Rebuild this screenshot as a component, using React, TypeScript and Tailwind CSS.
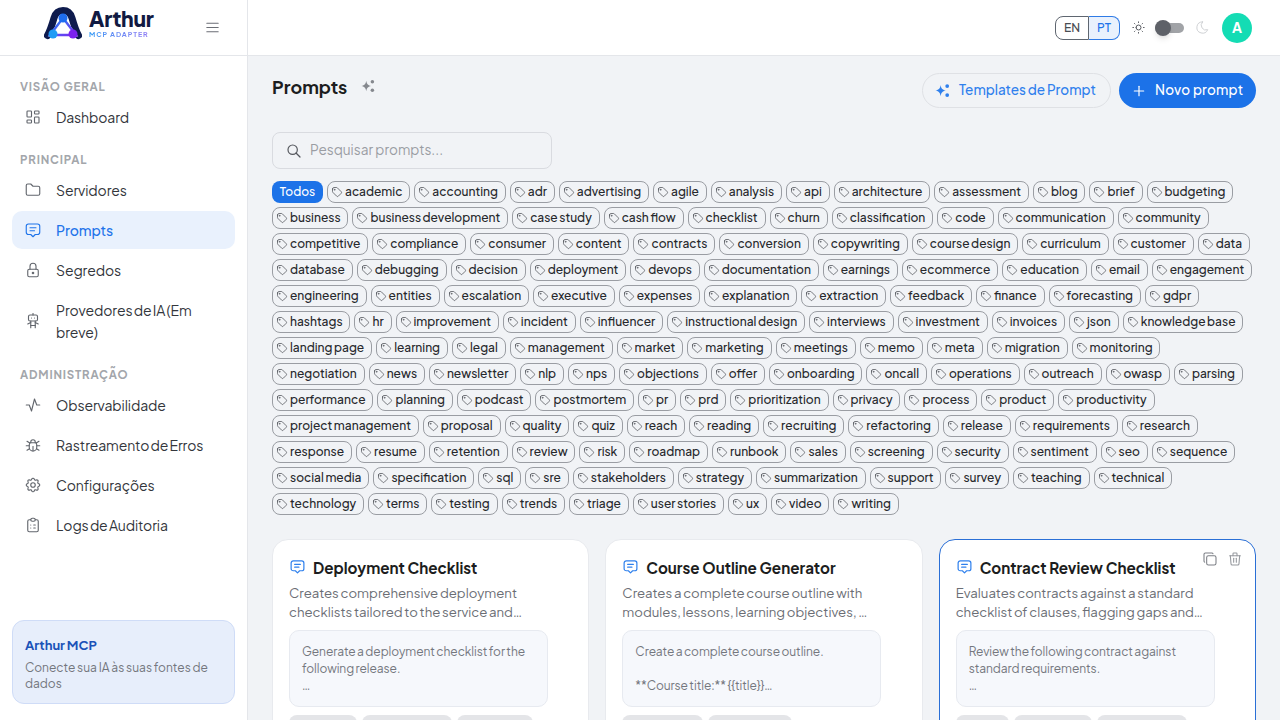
import React from "react";
import {
  TbLayoutDashboard, TbFolder, TbMessage2, TbLock, TbRobot, TbActivity, TbBug, TbSettings, TbClipboardList,
  TbTag, TbCopy, TbTrash, TbSun, TbMoon, TbSearch, TbMenu2, TbPlus,
} from "react-icons/tb";

const FONT = "font-['Plus_Jakarta_Sans','Inter','Noto_Sans',sans-serif]";

const Spark = ({ className }: { className?: string }) => (
  <svg viewBox="0 0 16 16" className={className} fill="currentColor">
    <path d="M6 2 C6.6 5.6 7.6 7 11.5 8 C7.6 9 6.6 10.4 6 14 C5.4 10.4 4.4 9 0.5 8 C4.4 7 5.4 5.6 6 2Z" />
    <circle cx="13" cy="3.2" r="2" />
    <circle cx="13" cy="12.8" r="2" />
  </svg>
);

const Logo = () => (
  <svg viewBox="0 0 38 33" className="w-[38px] h-[33px]">
    <defs>
      <linearGradient id="g1" x1="0" y1="0" x2="1" y2="1">
        <stop offset="0" stopColor="#1d8bf5" />
        <stop offset="1" stopColor="#7a2cf0" />
      </linearGradient>
    </defs>
    <path d="M3.5 28.5 C6 24 8 18 10 11 C11.5 6 14 3.5 19 3.5 C24 3.5 26.5 6 28 11 C30 18 32 24 34.5 28.5" fill="none" stroke="#0e1b4d" strokeWidth="7" strokeLinecap="round" />
    <path d="M19 11 L7 28 L31 28 Z" fill="#fff" stroke="#fff" strokeWidth="3" />
    <path d="M19 11 L6 28 L32 28 Z" fill="#fff" stroke="url(#g1)" strokeWidth="2.4" />
    <circle cx="19" cy="11" r="4.5" fill="#1e6df0" />
    <circle cx="9" cy="27" r="4.5" fill="#1e9bf5" />
    <circle cx="29" cy="27" r="4.5" fill="#7b22ee" />
  </svg>
);

type N = { label: React.ReactNode; icon: React.ComponentType<{ className?: string; strokeWidth?: number }>; active?: boolean; tall?: boolean };

const NavItem = ({ label, icon: Icon, active, tall }: N) => (
  <div className={`flex items-center gap-[14px] px-3 rounded-[10px] text-[14px] [word-spacing:-1px] tracking-[-0.1px] ${tall ? "py-[8px] leading-[22px]" : "h-[38px]"} ${active ? "bg-[#e9f1fd] text-[#1f74ea] font-medium" : "text-[#33363c]"}`}>
    <Icon strokeWidth={1.5} className={`w-[18px] h-[18px] shrink-0 ${active ? "text-[#1f74ea]" : "text-[#62666d]"}`} />
    <span>{label}</span>
  </div>
);

const Section = ({ title }: { title: string }) => (
  <div className="px-2 text-[11.5px] font-bold tracking-[0.07em] text-[#a3a6ab] leading-[16px]">{title}</div>
);

const rows = "academic,accounting,adr,advertising,agile,analysis,api,architecture,assessment,blog,brief,budgeting,business,business development,case study,cash flow,checklist,churn,classification,code,communication,community,competitive,compliance,consumer,content,contracts,conversion,copywriting,course design,curriculum,customer,data,database,debugging,decision,deployment,devops,documentation,earnings,ecommerce,education,email,engagement,engineering,entities,escalation,executive,expenses,explanation,extraction,feedback,finance,forecasting,gdpr,hashtags,hr,improvement,incident,influencer,instructional design,interviews,investment,invoices,json,knowledge base,landing page,learning,legal,management,market,marketing,meetings,memo,meta,migration,monitoring,negotiation,news,newsletter,nlp,nps,objections,offer,onboarding,oncall,operations,outreach,owasp,parsing,performance,planning,podcast,postmortem,pr,prd,prioritization,privacy,process,product,productivity,project management,proposal,quality,quiz,reach,reading,recruiting,refactoring,release,requirements,research,response,resume,retention,review,risk,roadmap,runbook,sales,screening,security,sentiment,seo,sequence,social media,specification,sql,sre,stakeholders,strategy,summarization,support,survey,teaching,technical,technology,terms,testing,trends,triage,user stories,ux,video,writing".split(",");

const Tag = ({ t }: { t: string }) => (
  <span className="inline-flex items-center h-[22px] gap-[2px] pl-[3px] pr-[6.9px] rounded-[8px] border border-[#9a9da3] text-[12px] font-medium text-[#26282c] [word-spacing:-0.5px]">
    <TbTag strokeWidth={1.6} className="w-[12px] h-[12px] text-[#55585e]" />
    {t}
  </span>
);

const Card = ({ title, desc, prompt, tags, hover }: { title: string; desc: string; prompt: string; tags: { t: string; w: string }[]; hover?: boolean }) => (
  <div className={`relative rounded-[16px] border bg-white p-[16px] pb-0 ${hover ? "border-[#2a6fd6]" : "border-[#e8eaee]"}`}>
    {hover && (
      <div className="absolute top-[11px] right-[12px] flex items-center gap-[9px] text-[#7c7f85]">
        <TbCopy strokeWidth={1.6} className="w-[16px] h-[16px]" />
        <TbTrash strokeWidth={1.6} className="w-[16px] h-[16px] text-[#96999e]" />
      </div>
    )}
    <div className="flex items-center gap-[7px] h-[24px]">
      <TbMessage2 strokeWidth={1.7} className="w-[17px] h-[17px] -mt-[4px] text-[#2f80ed]" />
      <div className="text-[15.2px] font-bold text-[#1c1d20]">{title}</div>
    </div>
    <div className="mt-[3px] text-[13.2px] leading-[19px] text-[#6b6e75] w-[270px] [word-spacing:-0.5px]">{desc}</div>
    <div className="mt-[9px] w-[259px] h-[77px] overflow-hidden rounded-[10px] border border-[#e7eaf0] bg-[#f6f8fc] px-[12px] pt-[12px] text-[12px] leading-[17px] text-[#74777e] whitespace-pre-line [word-spacing:-0.5px] tracking-[-0.06px]">{prompt}</div>
    <div className="mt-[8px] flex gap-[5px] h-[22px]">
      {tags.map(({ t, w }) => (
        <span key={t} className={`inline-flex items-center gap-[3px] pl-[5px] rounded-[8px] bg-[#e4e5e8] h-[22px] text-[12px] text-[#6b6e75] ${w}`}>
          <TbTag strokeWidth={1.6} className="w-[12px] h-[12px]" />
          {t}
        </span>
      ))}
    </div>
  </div>
);

export default function App() {
  return (
    <div className={`flex h-screen w-full overflow-hidden bg-[#f1f3f6] ${FONT}`}>
      <aside className="w-[248px] shrink-0 flex flex-col bg-white border-r border-[#e4e6ea]">
        <div className="h-[56px] shrink-0 border-b border-[#e4e6ea] flex items-center pl-[44px] pr-[26px] justify-between">
          <div className="flex items-center gap-[7px] -mt-[8px]">
            <Logo />
            <div className="flex flex-col">
              <span className="text-[21px] font-extrabold leading-[20px] text-[#111a42] tracking-[-0.01em]">Arthur</span>
              <span className="mt-[2px] text-[7px] font-bold tracking-[0.13em] leading-[8px] w-fit bg-gradient-to-r from-[#2f9bf5] to-[#8f7cf5] bg-clip-text text-transparent">MCP ADAPTER</span>
            </div>
          </div>
          <TbMenu2 strokeWidth={1.6} className="w-[17px] h-[17px] text-[#6b6e75]" />
        </div>
        <nav className="flex-1 flex flex-col px-3 pt-[23px]">
          <Section title="VISÃO GERAL" />
          <div className="mt-[3px]"><NavItem label="Dashboard" icon={TbLayoutDashboard} /></div>
          <div className="mt-[16px]"><Section title="PRINCIPAL" /></div>
          <div className="mt-[3px] flex flex-col gap-[2px]">
            <NavItem label="Servidores" icon={TbFolder} />
            <NavItem label="Prompts" icon={TbMessage2} active />
            <NavItem label="Segredos" icon={TbLock} />
            <NavItem label="Provedores de IA (Em breve)" icon={TbRobot} tall />
          </div>
          <div className="mt-[16px]"><Section title="ADMINISTRAÇÃO" /></div>
          <div className="mt-[3px] flex flex-col gap-[2px]">
            <NavItem label="Observabilidade" icon={TbActivity} />
            <NavItem label="Rastreamento de Erros" icon={TbBug} />
            <NavItem label="Configurações" icon={TbSettings} />
            <NavItem label="Logs de Auditoria" icon={TbClipboardList} />
          </div>
        </nav>
        <div className="mx-3 mb-[16px] h-[84px] rounded-[12px] border border-[#cfdcf7] bg-[#e7eefb] px-[12px] pt-[15px]">
          <div className="text-[13px] font-bold text-[#1a52b8] leading-[18px] [word-spacing:-0.5px]">Arthur MCP</div>
          <div className="mt-[6px] text-[12px] leading-[16px] text-[#73767d] [word-spacing:-0.3px]">Conecte sua IA às suas fontes de dados</div>
        </div>
      </aside>
      <div className="flex-1 min-w-0 flex flex-col">
        <header className="h-[56px] shrink-0 bg-white border-b border-[#e4e6ea] flex items-center justify-end pr-[28px]">
          <div className="flex h-[24px] text-[12px] font-medium">
            <span className="w-[34px] flex items-center justify-center rounded-l-[8px] border border-[#5f6670] text-[#4a4d53]">EN</span>
            <span className="w-[31px] flex items-center justify-center rounded-r-[8px] border border-l-0 border-[#2f7be6] bg-[#e9f1fd] text-[#1f74ea]">PT</span>
          </div>
          <TbSun strokeWidth={1.6} className="ml-[11px] w-[15px] h-[15px] text-[#55585e]" />
          <div className="relative ml-[9px] w-[29px] h-[10px] rounded-full bg-[#a1a3a7]">
            <div className="absolute left-0 -top-[3px] w-[16px] h-[16px] rounded-full bg-[#5e6168] shadow-md" />
          </div>
          <TbMoon strokeWidth={1.6} className="ml-[11px] w-[15px] h-[15px] text-[#d0d2d5]" />
          <div className="ml-[12px] w-[30px] h-[30px] rounded-full bg-[#14dcb4] text-white text-[14px] font-bold flex items-center justify-center">A</div>
        </header>
        <main className="flex-1 min-h-0 overflow-hidden px-[24px] pt-[17px]">
          <div className="flex items-start justify-between h-[35px]">
            <div className="flex items-center gap-[14px] h-[26px]">
              <h1 className="text-[18px] font-bold text-[#1c1d20]">Prompts</h1>
              <Spark className="w-[14px] h-[14px] text-[#85888e]" />
            </div>
            <div className="flex gap-[8px]">
              <button className="h-[35px] w-[189px] rounded-full border border-[#dfe1e5] flex items-center pl-[12px] gap-[9px] text-[13.5px] font-medium text-[#2f80ed] [word-spacing:-0.5px]">
                <Spark className="w-[15px] h-[15px]" />
                Templates de Prompt
              </button>
              <button className="h-[35px] w-[137px] rounded-full bg-[#1c72e8] flex items-center pl-[12px] gap-[8px] text-[13.5px] font-medium text-white tracking-[0.2px]">
                <TbPlus strokeWidth={1.8} className="w-[16px] h-[16px]" />
                Novo prompt
              </button>
            </div>
          </div>
          <div className="mt-[24px] w-[280px] h-[37px] rounded-[8px] border border-[#d9dbe0] flex items-center pl-[13px] gap-[8px] text-[13.6px] text-[#9a9da3]">
            <TbSearch strokeWidth={1.8} className="w-[16px] h-[16px] text-[#55585e]" />
            Pesquisar prompts...
          </div>
          <div className="mt-[12px] flex flex-wrap gap-x-[4px] gap-y-[4px]">
            <span className="inline-flex items-center h-[22px] w-[51px] justify-center rounded-[8px] bg-[#1c72e8] text-white text-[12px] font-medium">Todos</span>
            {rows.map((t) => <Tag key={t} t={t} />)}
          </div>
          <div className="mt-[24px] grid grid-cols-3 gap-[16px]">
            <Card title="Deployment Checklist" desc="Creates comprehensive deployment checklists tailored to the service and…" prompt={"Generate a deployment checklist for the following release.\n…"} tags={[{ t: "checklist", w: "w-[68px]" }, { t: "deployment", w: "w-[90px]" }, { t: "devops", w: "w-[76px]" }]} />
            <Card title="Course Outline Generator" desc="Creates a complete course outline with modules, lessons, learning objectives, …" prompt={"Create a complete course outline.\n\n**Course title:** {{title}}…"} tags={[{ t: "curriculum", w: "w-[81px]" }, { t: "education", w: "w-[84px]" }]} />
            <Card hover title="Contract Review Checklist" desc="Evaluates contracts against a standard checklist of clauses, flagging gaps and…" prompt={"Review the following contract against standard requirements.\n…"} tags={[{ t: "legal", w: "w-[53px]" }, { t: "contracts", w: "w-[78px]" }, { t: "compliance", w: "w-[90px]" }]} />
          </div>
        </main>
      </div>
    </div>
  );
}
